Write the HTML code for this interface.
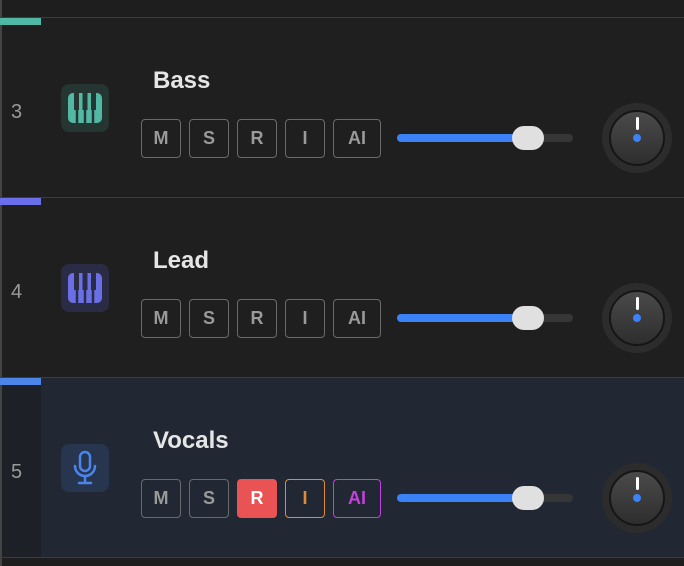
<!DOCTYPE html><html><head><style>
body{margin:0;width:684px;height:566px;background:#1e1e1e;font-family:"Liberation Sans",sans-serif;overflow:hidden;position:relative}
.row{position:absolute;left:0;width:684px;height:180px;background:#1f1f1f;border-top:1px solid #3c3c3c;box-sizing:border-box}
.lb{position:absolute;left:0;top:0;width:2px;height:100%;background:#444}
.acc{position:absolute;left:0;top:0;width:41px;height:7px}
.num{position:absolute;left:11px;top:83px;font-size:20px;color:#9a9a9a}
.ic{position:absolute;left:61px;top:66px;width:48px;height:48px;border-radius:8px}
.name{position:absolute;left:153px;top:49px;font-size:24px;font-weight:bold;color:#e6e6e6}
.b{position:absolute;top:101px;height:37px;width:38px;border:1px solid #6a6a6a;border-radius:4px;color:#9a9a9a;font-weight:bold;font-size:18px;text-align:center;line-height:37px}
.tr{position:absolute;left:397px;top:116px;width:176px;height:8px;border-radius:4px;background:#363636}
.fi{position:absolute;left:0;top:0;width:124px;height:8px;border-radius:4px;background:#3b82f6}
.th{position:absolute;left:115px;top:-8px;width:32px;height:24px;border-radius:12px;background:#e0e0e0}
.kn{position:absolute;left:602px;top:85px;width:70px;height:70px;border-radius:50%;background:#2c2c2c}
.ki{position:absolute;left:7px;top:7px;width:56px;height:56px;border-radius:50%;background:linear-gradient(#4a4a4a,#2e2e2e);border:2px solid #161616;box-sizing:border-box}
.kl{position:absolute;width:3px;height:13px;background:#fff;border-radius:2px}
.kd{position:absolute;width:8px;height:8px;border-radius:50%;background:#3b82f6}
</style></head><body>
<div style="position:absolute;left:0;top:0;width:2px;height:17px;background:#444"></div>
<div class="row" style="top:17px"><div class="lb"></div><div class="acc" style="background:#4fb9a5"></div><div class="num">3</div>
<div class="ic" style="background:#253632"><svg width="48" height="48"><rect x="7" y="9" width="34" height="30" rx="5" fill="#52b8a4"/><g stroke="#253632" stroke-width="2.5"><line x1="16" y1="9" x2="16" y2="40"/><line x1="24" y1="9" x2="24" y2="40"/><line x1="32" y1="9" x2="32" y2="40"/></g><g fill="#253632"><rect x="13" y="9" width="5" height="17"/><rect x="21.5" y="9" width="5" height="17"/><rect x="30" y="9" width="5" height="17"/></g></svg></div>
<div class="name">Bass</div>
<div class="b" style="left:141px">M</div><div class="b" style="left:189px">S</div><div class="b" style="left:237px">R</div><div class="b" style="left:285px">I</div><div class="b" style="left:333px;width:46px">AI</div>
<div class="tr"><div class="fi"></div><div class="th"></div></div>
<div class="kn"><div class="ki"><div class="kl" style="left:25px;top:5px"></div><div class="kd" style="left:22px;top:22px"></div></div></div></div>

<div class="row" style="top:197px"><div class="lb"></div><div class="acc" style="background:#6a6ee8"></div><div class="num">4</div>
<div class="ic" style="background:#2a2c45"><svg width="48" height="48"><rect x="7" y="9" width="34" height="30" rx="5" fill="#6b6fe6"/><g stroke="#2a2c45" stroke-width="2.5"><line x1="16" y1="9" x2="16" y2="40"/><line x1="24" y1="9" x2="24" y2="40"/><line x1="32" y1="9" x2="32" y2="40"/></g><g fill="#2a2c45"><rect x="13" y="9" width="5" height="17"/><rect x="21.5" y="9" width="5" height="17"/><rect x="30" y="9" width="5" height="17"/></g></svg></div>
<div class="name">Lead</div>
<div class="b" style="left:141px">M</div><div class="b" style="left:189px">S</div><div class="b" style="left:237px">R</div><div class="b" style="left:285px">I</div><div class="b" style="left:333px;width:46px">AI</div>
<div class="tr"><div class="fi"></div><div class="th"></div></div>
<div class="kn"><div class="ki"><div class="kl" style="left:25px;top:5px"></div><div class="kd" style="left:22px;top:22px"></div></div></div></div>

<div class="row" style="top:377px;background:#222833"><div style="position:absolute;left:0;top:0;width:41px;height:100%;background:#1e2027"></div><div class="lb"></div><div class="acc" style="background:#4a86ea"></div><div class="num">5</div>
<div class="ic" style="background:#27354f"><svg width="48" height="48"><rect x="19" y="8" width="10" height="19" rx="5" fill="none" stroke="#4a86ea" stroke-width="2.5"/><path d="M14 22a10 10 0 0 0 20 0M24 32v7M18 39h12" fill="none" stroke="#4a86ea" stroke-width="2.5" stroke-linecap="round"/></svg></div>
<div class="name">Vocals</div>
<div class="b" style="left:141px">M</div><div class="b" style="left:189px">S</div><div class="b" style="left:237px;background:#ea5353;border-color:#ea5353;color:#fff">R</div><div class="b" style="left:285px;border-color:#e08a35;color:#e08a35">I</div><div class="b" style="left:333px;width:46px;border-color:#c43fe0;color:#c43fe0">AI</div>
<div class="tr"><div class="fi"></div><div class="th"></div></div>
<div class="kn"><div class="ki"><div class="kl" style="left:25px;top:5px"></div><div class="kd" style="left:22px;top:22px"></div></div></div></div>
<div style="position:absolute;left:0;top:557px;width:684px;height:1px;background:#3c3c3c"></div>
<div style="position:absolute;left:0;top:558px;width:2px;height:8px;background:#444"></div>
</body></html>
